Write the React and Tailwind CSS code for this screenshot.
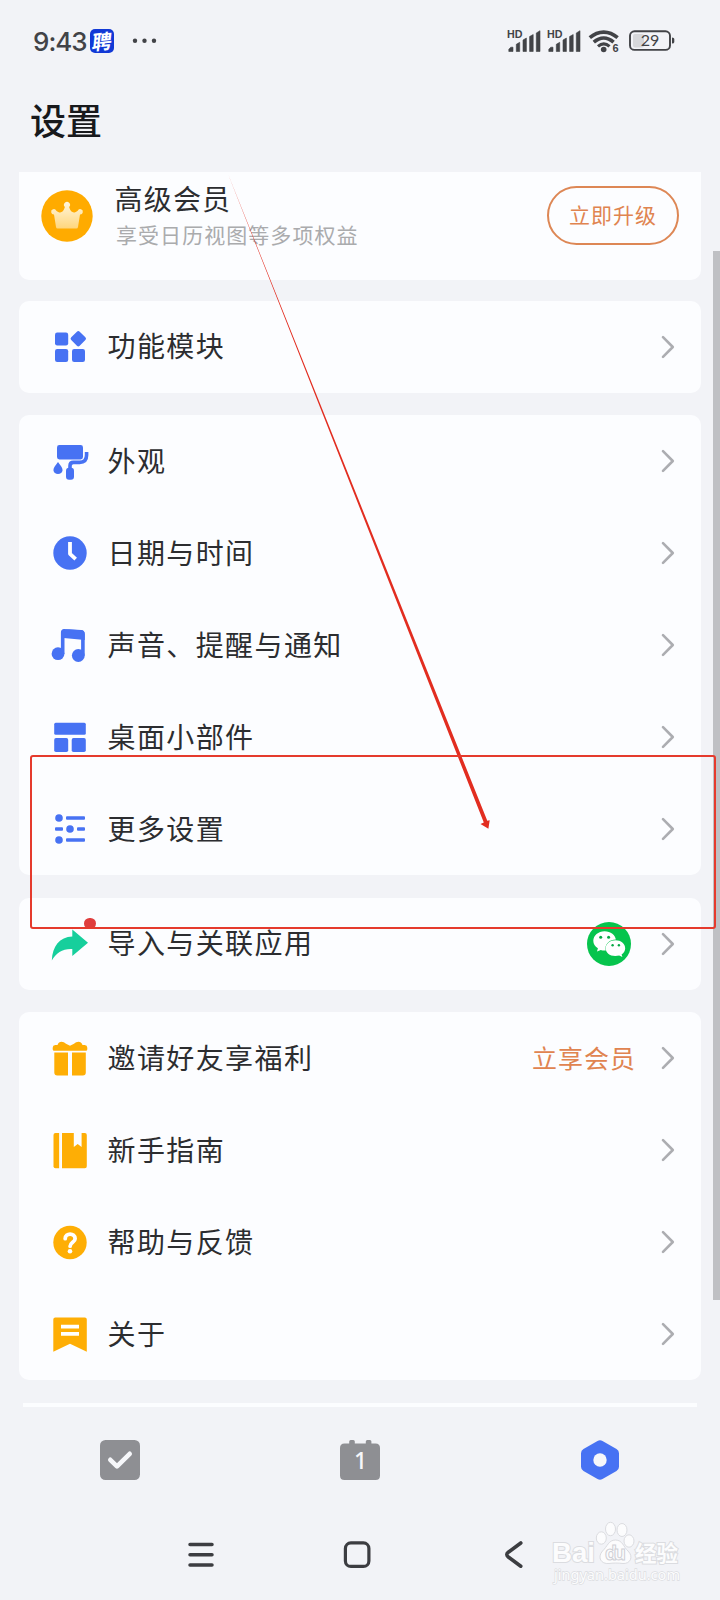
const Chevron = () => (
  <svg className="w-[14px] h-6 shrink-0" viewBox="0 0 14 24" fill="none" stroke="#acadb1" strokeWidth="2.6" strokeLinecap="round" strokeLinejoin="round">
    <path d="M2 2.2 11.8 12 2 21.8" />
  </svg>
)

const Icon = ({ color, children }) => (
  <svg className="w-10 h-10 shrink-0" viewBox="0 0 40 40" fill={color}>
    {children}
  </svg>
)

const blue = "#4772f3"
const amber = "#feae05"

const ModulesIcon = () => (
  <Icon color={blue}>
    <rect x="5" y="5.5" width="13.2" height="13" rx="2.2" />
    <rect x="5" y="22" width="13.2" height="13" rx="2.2" />
    <rect x="22" y="22" width="13" height="13" rx="2.2" />
    <rect x="22.3" y="5.7" width="12" height="12" rx="2" transform="rotate(45 28.3 11.7)" />
  </Icon>
)

const RollerIcon = () => (
  <Icon color={blue}>
    <rect x="7" y="4" width="26" height="14.5" rx="2.4" />
    <path d="M36.6 11v3c0 5.2-2.6 7.400-7 7.400h-6.200c-2.200 0-3.400 1-3.400 3.400v4" fill="none" stroke={blue} strokeWidth="3.600" />
    <rect x="16" y="26.800" width="8" height="12" rx="3" />
    <path d="M8 21c2.200 3.200 4.600 5.500 4.600 8.200a4.700 4.700 0 0 1-9.200 0C3.400 26.500 5.800 24.200 8 21z" />
  </Icon>
)

const ClockIcon = () => (
  <Icon color={blue}>
    <circle cx="20" cy="20" r="16.700" />
    <path d="M20 11v9.800l4.300 4" fill="none" stroke="#fff" strokeWidth="3.800" strokeLinecap="square" strokeLinejoin="round" />
  </Icon>
)

const MusicIcon = () => (
  <Icon color={blue}>
    <circle cx="8" cy="28.700" r="6.400" />
    <circle cx="28.300" cy="30.500" r="6.400" />
    <path d="M12.700 29V7.600q0-1.900 2-1.700l16.300 1q1.900.1 1.900 2V30.500" fill="none" stroke={blue} strokeWidth="3.600" />
    <path d="M11 14V8q0-4 4-3.800l16 1.100q3.800.3 3.800 4V15L11 12.700z" />
  </Icon>
)

const WidgetIcon = () => (
  <Icon color={blue}>
    <rect x="4.200" y="5.800" width="31.600" height="12" rx="1.500" />
    <rect x="4.200" y="21.100" width="14" height="14" rx="1.800" />
    <rect x="21.700" y="21.100" width="14.100" height="14" rx="1.800" />
  </Icon>
)

const MoreIcon = () => (
  <Icon color={blue}>
    <circle cx="9" cy="9" r="3.800" />
    <circle cx="20" cy="20" r="3.800" />
    <circle cx="9" cy="31" r="3.800" />
    <rect x="16" y="7.200" width="19" height="3.600" rx="1" />
    <rect x="5" y="18.200" width="8" height="3.600" rx="1" />
    <rect x="27" y="18.200" width="8" height="3.600" rx="1" />
    <rect x="16" y="29.200" width="19" height="3.600" rx="1" />
  </Icon>
)

const ShareIcon = () => (
  <Icon color="#16cf9c">
    <path d="M22.300 5.400 38 18.800 22.300 31.900v-6.800C13 24.500 6 29 1.800 36.500 2.500 22 9.500 13 22.300 12.500z" />
  </Icon>
)

const GiftIcon = () => (
  <Icon color={amber}>
    <path d="M7.500 7c1.500-4.500 6-3.500 8.500-1.200l4 2 4-2c2.500-2.300 7-3.300 8.500 1.200h2.200q2.600.3 2.600 2.800v1.500q0 1.500-1.500 1.500H4.200q-1.500 0-1.500-1.500V9.800q0-2.500 2.600-2.800z" />
    <path d="M4.300 14.500H18v23H7.300q-3 0-3-3zM22 14.500h13.800v20q0 3-3 3H22z" />
  </Icon>
)

const GuideIcon = () => (
  <Icon color={amber}>
    <path d="M3.500 5q0-2 2-2H9v35.200H5.500q-2 0-2-2z" />
    <path d="M12 3h11.800v14l3.900-3 3.900 3V3h3.300q1.900 0 1.900 2v31.200q0 2-2 2H12z" />
    <path d="M9.200 3h1v35.200h-1z" opacity=".2" />
  </Icon>
)

const HelpIcon = () => (
  <Icon color={amber}>
    <circle cx="20" cy="20.500" r="16.700" />
    <path d="M15.200 16.700c0-6.200 9.900-6.200 9.900 0 0 3.500-5 3.600-5 7.500" fill="none" stroke="#fff" strokeWidth="3.800" strokeLinecap="round" />
    <circle cx="20" cy="29.300" r="2.300" fill="#fff" />
  </Icon>
)

const AboutIcon = () => (
  <Icon color={amber}>
    <path d="M3.300 5.500q0-2 2-2h29.500q2 0 2 2v32.300L20 29.800 3.300 37.800z" />
    <path d="M11 10.700h18v3.700H11zM11 18h18v3.700H11z" fill="#fff" />
  </Icon>
)

const WechatIcon = () => (
  <svg className="w-11 h-11 shrink-0" viewBox="0 0 44 44">
    <circle cx="22" cy="22" r="22" fill="#06c44d" />
    <path d="M17.500 9.200c6.200 0 11 4 11.300 8.400-6 .2-10.300 4-10.300 8.800 0 .8.100 1.300.3 2-1.800.2-3.500.1-5-.4L10 29.500l.9-3.300c-3-1.900-4.600-4.300-4.600-7.400 0-5.300 5-9.600 11.200-9.600z" fill="#fff" />
    <path d="M28.500 18.300c5.400 0 9.700 3.400 9.700 7.900 0 2.500-1.300 4.700-3.600 6.200l.8 2.600-3.200-1.500c-8.300 1.800-13.500-2.200-13.500-7.300 0-4.500 4.400-7.900 9.800-7.900z" fill="#fff" />
    <g fill="#06a845">
      <circle cx="13.700" cy="15.200" r="1.500" />
      <circle cx="21.600" cy="15.200" r="1.500" />
      <circle cx="25.600" cy="23.200" r="1.200" />
      <circle cx="31.900" cy="23.200" r="1.200" />
    </g>
  </svg>
)

const CrownIcon = () => (
  <svg className="w-[52px] h-[52px] shrink-0" viewBox="0 0 52 52">
    <defs>
      <linearGradient id="crown" x1="0" y1="0" x2="0" y2="1">
        <stop offset="0" stopColor="#fff6dd" />
        <stop offset="1" stopColor="#ffd67c" />
      </linearGradient>
    </defs>
    <circle cx="26" cy="26" r="25.700" fill="#ffab00" />
    <path d="M13 24.500a2.700 2.700 0 1 1 2.300-3.800c3.500 3 6.700 2.600 8.600-3.600a3 3 0 1 1 4.200 0c1.900 6.200 5.100 6.600 8.600 3.600a2.700 2.700 0 1 1 2.300 3.800L37 37q-.3 1.500-1.500 1.500h-19Q15.300 38.500 15 37z" fill="url(#crown)" />
  </svg>
)

const Row = ({ icon, label, dot, extra }) => (
  <div className="h-[92px] flex items-center pl-[31px] pr-[26px]">
    <div className="relative">
      {icon}
      {dot && <span className="absolute -top-[6px] left-[34px] w-[11.500px] h-[11.500px] rounded-full bg-[#df3d3d]" />}
    </div>
    <span className="ml-[17.500px] mb-[3px] text-[28px] leading-10 tracking-[1.400px] whitespace-nowrap">{label}</span>
    <div className="ml-auto flex items-center">
      {extra}
      <Chevron />
    </div>
  </div>
)

const Card = ({ children }) => <div className="bg-[#fcfdff] rounded-[10px]">{children}</div>

const Signal = () => (
  <svg className="w-9 h-6 mr-1 overflow-visible" viewBox="0 0 36 24" fill="#424347">
    <text x="0" y="9" fontSize="10" fontWeight="700" fontFamily="Liberation Sans" textLength="15.500" lengthAdjust="spacingAndGlyphs">HD</text>
    <path d="M1.800 22.500v-2.300l2-2H6v4.300zM9.300 22.500v-7.200l3.400-2v9.200zM16 22.500V11l3.400-2v13.500zM22.600 22.500V7.500l3.600-2v17zM29.300 22.500V4l3.700-2.300v20.800z" stroke="#424347" strokeWidth=".6" strokeLinejoin="round" />
  </svg>
)

const StatusBar = () => (
  <div className="h-[82px] flex items-center pl-[33px] text-[#424347]">
    <span className="w-[50px] text-[26px] font-medium font-[Inter,sans-serif] tracking-[-1px] whitespace-nowrap">9:43</span>
    <div className="ml-[7px] w-6 h-6 rounded-[5px] bg-[#1239d6] flex items-center justify-center text-white text-[20px] leading-6 font-bold">
      <span className="-skew-x-12 -rotate-6">聘</span>
    </div>
    <svg className="ml-[17px] w-7 h-5" viewBox="0 0 28 20" fill="#424347">
      <circle cx="4" cy="9.700" r="2.200" />
      <circle cx="13.500" cy="9.700" r="2.200" />
      <circle cx="23" cy="9.700" r="2.200" />
    </svg>
    <div className="ml-auto mr-[45px] flex items-center">
      <Signal />
      <Signal />
      <svg className="ml-px w-8 h-6 mr-[9px] overflow-visible" viewBox="0 0 32 24" fill="none" stroke="#424347" strokeWidth="3.600">
        <path d="M1.800 8.700c8.500-7.500 19.300-7.500 27.800 0" />
        <path d="M5.800 13.200c6.300-5.500 13.500-5.500 19.800 0" />
        <path d="M10 17.400c3.800-3.200 7.800-3.200 11.500 0" strokeWidth="3.200" />
        <circle cx="15.700" cy="20.500" r="2.800" fill="#424347" stroke="none" />
        <text x="24.500" y="23" fontSize="11" fontWeight="700" fontFamily="Liberation Sans" fill="#424347" stroke="none">6</text>
      </svg>
      <svg className="w-[46px] h-6" viewBox="0 0 46 24">
        <rect x="1" y="2.300" width="40" height="18.600" rx="4.500" fill="none" stroke="#424347" strokeWidth="1.900" />
        <rect x="4" y="5" width="11" height="13.500" rx="2" fill="#d6d7da" />
        <path d="M43 8.500q2.300 0 2.300 1.500v3q0 1.500-2.300 1.500z" fill="#424347" />
        <text x="21" y="17.300" fontSize="16" textAnchor="middle" fontFamily="Lato" fill="#424347">29</text>
      </svg>
    </div>
  </div>
)

const TabBar = () => (
  <div className="mt-[33px] h-10 grid grid-cols-3 justify-items-center">
    <svg className="w-10 h-10" viewBox="0 0 40 40">
      <rect width="40" height="40" rx="5.500" fill="#8e8f93" />
      <path d="M10.300 19.800 17 26.300l12.700-12.500" fill="none" stroke="#f6f7fa" strokeWidth="4.600" strokeLinecap="round" strokeLinejoin="round" />
    </svg>
    <svg className="w-10 h-10" viewBox="0 0 40 40">
      <path d="M4.500 3.500h4.700V1.500q0-1.500 1.500-1.500h2.600q1.500 0 1.500 1.500v2h11v-2q0-1.500 1.500-1.500h2.600q1.500 0 1.500 1.500v2h4.100Q40 3.500 40 8v27.500q0 4.500-4.500 4.500h-31Q0 40 0 35.500V8q0-4.500 4.500-4.500z" fill="#8e8f93" />
      <text x="20.500" y="28.800" fontSize="23" textAnchor="middle" fill="#f6f7fa" fontFamily="Noto Sans" fontWeight="500">1</text>
    </svg>
    <svg className="w-10 h-10" viewBox="0 0 40 40">
      <path d="M17.500 1Q20-.6 22.500 1l14 8Q39 10.500 39 13.300v13.400q0 2.800-2.500 4.300l-14 8q-2.500 1.600-5 0l-14-8Q1 29.500 1 26.700V13.300Q1 10.500 3.500 9z" fill={blue} />
      <circle cx="20" cy="20" r="6.700" fill="#f6f7fa" />
    </svg>
  </div>
)

const SystemNav = () => (
  <div className="mt-[61px] h-7 flex pl-[187px]">
    <svg className="w-7 h-7" viewBox="0 0 28 28" stroke="#3c3d41" strokeWidth="3.500" strokeLinecap="round">
      <path d="M3 3.500h22M3 13.700h22M3 24h22" />
    </svg>
    <svg className="ml-[128px] w-7 h-7" viewBox="0 0 28 28" fill="none" stroke="#3c3d41" strokeWidth="3.200">
      <rect x="2.400" y="1.900" width="23.500" height="23.500" rx="5.500" />
    </svg>
    <svg className="ml-[132px] w-7 h-7" viewBox="0 0 28 28" fill="none" stroke="#3c3d41" strokeWidth="3.600" strokeLinecap="round" strokeLinejoin="round">
      <path d="M17.800 2 5.300 11.200q-3 2.400 0 4.800L17.800 25.200" />
    </svg>
  </div>
)

const Watermark = () => (
  <svg className="absolute left-[548px] top-[1516px] w-[140px] h-[76px]" viewBox="0 0 140 76" fill="#fcfcfd" stroke="#dbdce0" strokeWidth="1">
    <text x="4" y="46" fontSize="28" fontWeight="700" fontFamily="Liberation Sans" paintOrder="stroke" strokeWidth="2" textLength="43" lengthAdjust="spacingAndGlyphs">Bai</text>
    <ellipse cx="53.300" cy="22" rx="5" ry="6.200" />
    <ellipse cx="62.500" cy="13" rx="5" ry="6.700" />
    <ellipse cx="74" cy="14" rx="5" ry="6.500" />
    <ellipse cx="81" cy="25" rx="5" ry="6.200" />
    <path d="M67.500 24c7 0 8 7 12.500 11 6 6 2 13-5 12.500-5-.6-10-.6-14 0-8 .8-12-6-6.500-12.500 5-4.500 6-11 13-11z" />
    <text x="57" y="44" fontSize="19" fontWeight="700" stroke="#cfd0d5" fontFamily="Open Sans" textLength="21">du</text>
    <text x="87" y="45" fontSize="21.500" fontWeight="700" paintOrder="stroke" strokeWidth="2" textLength="43">经验</text>
    <text x="6" y="64" fontSize="15" paintOrder="stroke" strokeWidth="1.300" fontFamily="Noto Sans" textLength="126" lengthAdjust="spacingAndGlyphs">jingyan.baidu.com</text>
  </svg>
)

export default function App() {
  return (
    <div className="relative w-[720px] h-[1600px] overflow-hidden bg-[#f2f3f7] text-[#2c2d30] font-['Noto_Sans_CJK_SC',sans-serif]">
      <StatusBar />
      <h1 className="h-[90px] pl-[30px] pt-[12px] text-[36px] leading-[50px] font-medium text-[#18191c]">设置</h1>

      {/* Scrolling settings list */}
      <div className="h-[1235px] overflow-hidden pl-[19px] pr-[19px]">
        <div className="h-[107.500px] mb-[21px] bg-[#fcfdff] rounded-b-[10px] flex items-start pl-[21.500px] pr-[22px]">
          <div className="mt-[17.500px]">
            <CrownIcon />
          </div>
          <div className="ml-[22px] mt-[6px]">
            <p className="text-[28px] leading-10 tracking-[1.200px]">高级会员</p>
            <p className="pl-[1.500px] text-[21px] leading-8 tracking-[1.050px] text-[#aaabad]">享受日历视图等多项权益</p>
          </div>
          <button className="ml-auto mt-[14px] w-[132px] h-[59px] pb-0.5 rounded-full border-2 border-[#dd8755] text-[#e08450] text-[21px] tracking-[1px]">
            立即升级
          </button>
        </div>

        <div className="flex flex-col gap-[22.500px]">
          <Card>
            <Row icon={<ModulesIcon />} label="功能模块" />
          </Card>
          <Card>
            <Row icon={<RollerIcon />} label="外观" />
            <Row icon={<ClockIcon />} label="日期与时间" />
            <Row icon={<MusicIcon />} label="声音、提醒与通知" />
            <Row icon={<WidgetIcon />} label="桌面小部件" />
            <Row icon={<MoreIcon />} label="更多设置" />
          </Card>
          <Card>
            <Row icon={<ShareIcon />} label="导入与关联应用" dot extra={<div className="mr-[30px]"><WechatIcon /></div>} />
          </Card>
          <Card>
            <Row
              icon={<GiftIcon />}
              label="邀请好友享福利"
              extra={<span className="mr-[25px] text-[25px] tracking-[1px] text-[#e08450]">立享会员</span>}
            />
            <Row icon={<GuideIcon />} label="新手指南" />
            <Row icon={<HelpIcon />} label="帮助与反馈" />
            <Row icon={<AboutIcon />} label="关于" />
          </Card>
          <div className="mx-1 h-10 bg-[#fcfdff]" />
        </div>
      </div>

      <TabBar />
      <SystemNav />

      {/* Scrollbar */}
      <div className="absolute right-0 top-[251px] w-[7px] h-[1049px] bg-[#bfc0c4]" />

      {/* Annotation arrow and frame */}
      <svg className="absolute inset-0 w-[720px] h-[1600px] pointer-events-none" viewBox="0 0 720 1600" fill="#e22d20">
        <path d="M228 174 487.300 820.800l2.400-.6-1.300 8.600-7.900-4.800 3.300-1.600z" />
      </svg>
      <div className="absolute left-[30px] top-[755px] w-[686px] h-[174px] rounded-[3px] border-2 border-[#e53a2d] pointer-events-none" />

      <Watermark />
    </div>
  )
}
